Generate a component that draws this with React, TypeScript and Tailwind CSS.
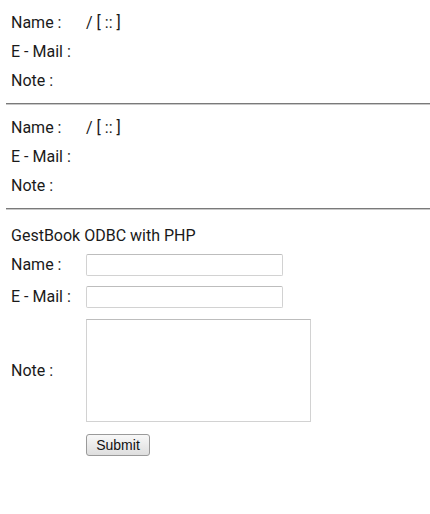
const entries = [
    { name: "/ [ :: ]", mail: "", note: "" },
    { name: "/ [ :: ]", mail: "", note: "" },
];

/* ---------------- Page ---------------- */

export default function App() {
    return (
        <div className="min-h-[514px] w-[430px] bg-white text-[16px] text-[#1a1a1a] font-['Roboto',sans-serif]">

            {entries.map((e, i) => (
                <div key={i}>
                    <div className="pl-[11px] pt-[8px] pb-[8px]">
                        <div className="flex h-[29px] items-center">
                            <span className="w-[75px]">Name :</span>
                            <span>{e.name}</span>
                        </div>
                        <div className="flex h-[29px] items-center">
                            <span className="w-[75px]">E - Mail :</span>
                            <span>{e.mail}</span>
                        </div>
                        <div className="flex h-[29px] items-center">
                            <span className="w-[75px]">Note :</span>
                            <span>{e.note}</span>
                        </div>
                    </div>
                    <hr className="ml-[6px] border-0 border-t border-t-[#7a7a7a] border-b border-b-[#c8c8c8]" />
                </div>
            ))}

            {/* Form */}
            <form className="pl-[11px] pt-[11px]" onSubmit={(ev) => ev.preventDefault()}>
                <div className="flex h-[29px] items-center">GestBook ODBC with PHP</div>
                <div className="mt-[4px] flex h-[22px] items-center">
                    <span className="w-[75px]">Name :</span>
                    <input className="h-[22px] w-[197px] rounded-[2px] border border-[#d2d2d2] border-t-[#bdbdbd] bg-white" />
                </div>
                <div className="mt-[10px] flex h-[22px] items-center">
                    <span className="w-[75px]">E - Mail :</span>
                    <input className="h-[22px] w-[197px] rounded-[2px] border border-[#d2d2d2] border-t-[#bdbdbd] bg-white" />
                </div>
                <div className="mt-[11px] flex h-[103px] items-center">
                    <span className="w-[75px]">Note :</span>
                    <textarea className="h-[103px] w-[225px] resize-none border border-[#d2d2d2] border-t-[#bdbdbd] bg-white" />
                </div>
                <div className="mt-[11px] pl-[75px]">
                    <button
                        type="submit"
                        className="h-[22px] w-[64px] rounded-[3px] border border-[#9a9a9a] bg-gradient-to-b from-[#f8f8f8] to-[#dedede] text-[14px] text-[#111] font-['Liberation_Sans',sans-serif]"
                    >
                        Submit
                    </button>
                </div>
            </form>
        </div>
    )
}
